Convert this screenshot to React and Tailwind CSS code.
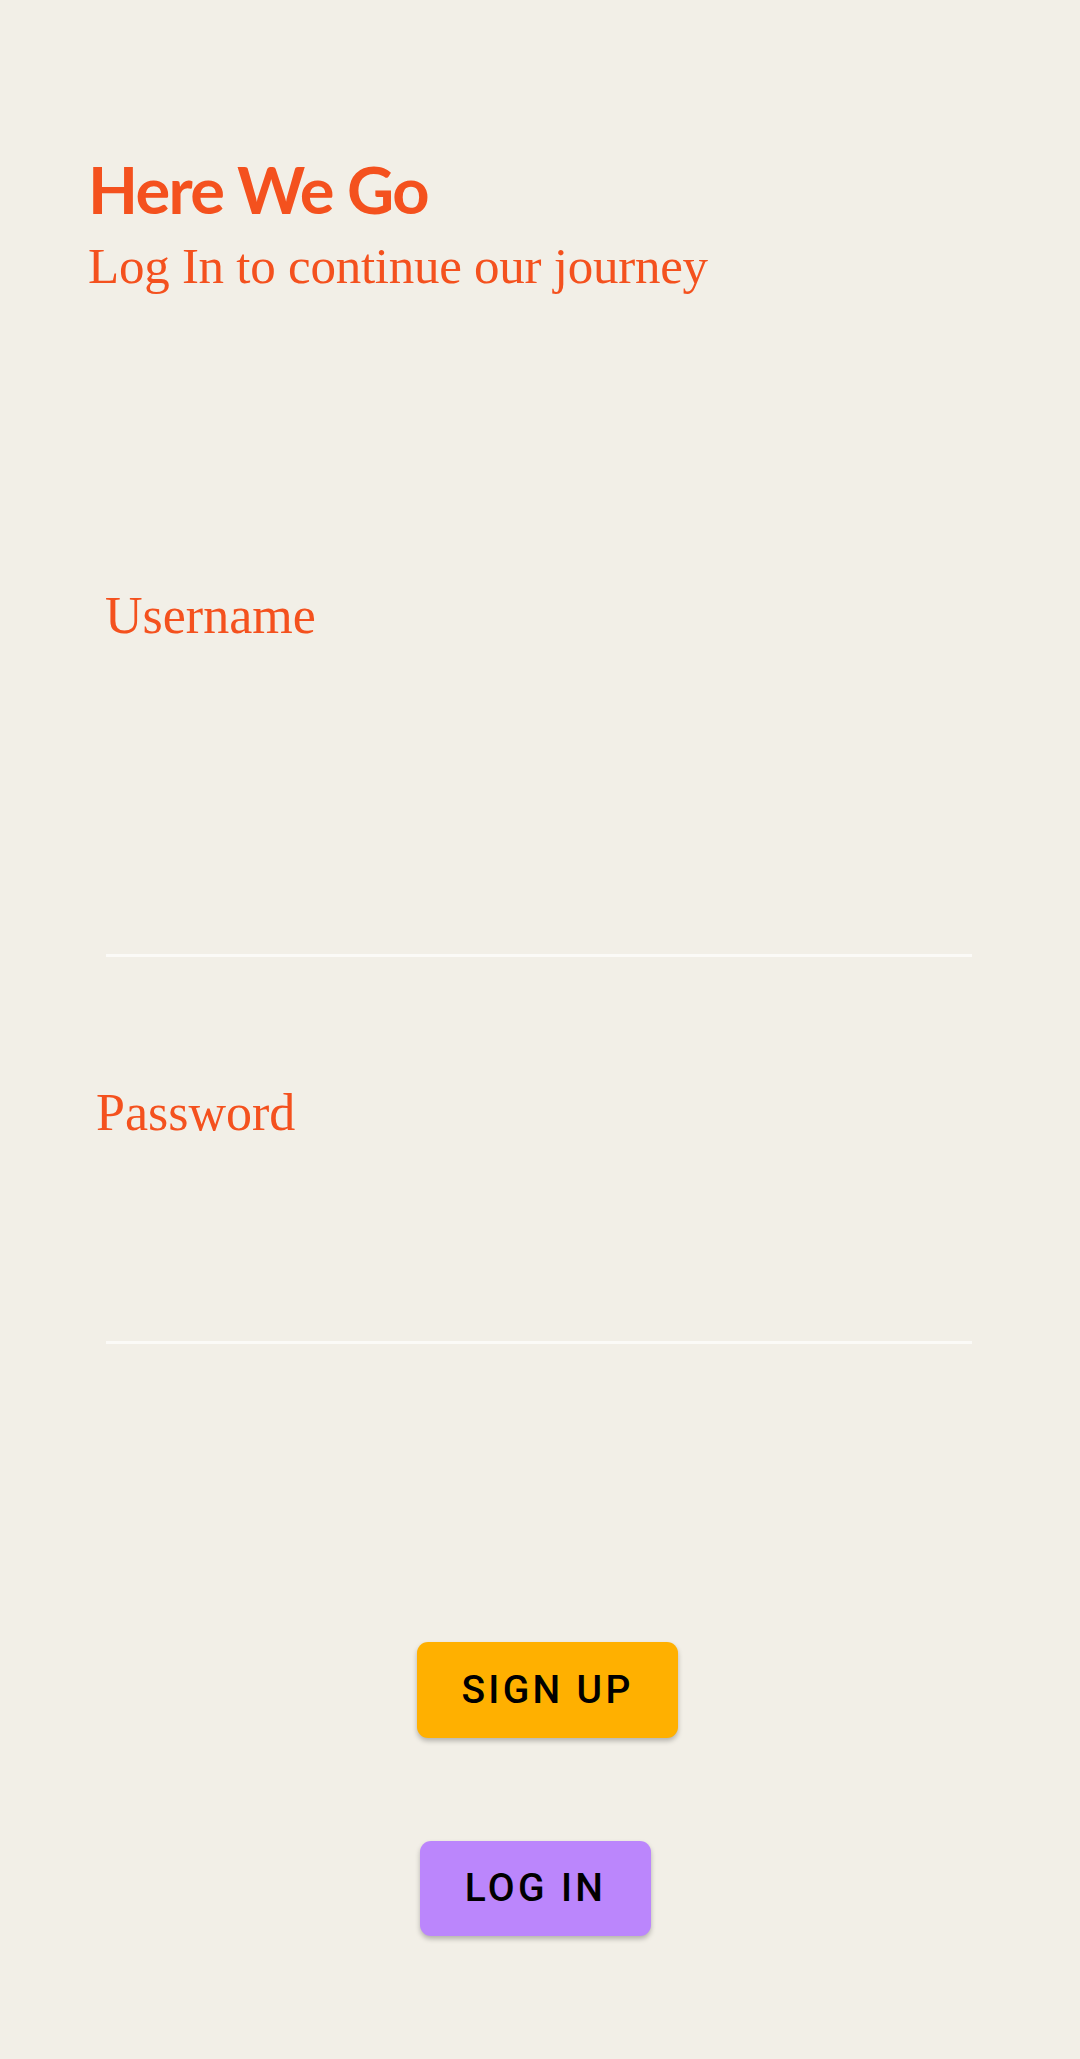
const serif = { fontFamily: '"Liberation Serif", serif' };

const Field = ({ label, labelClass, gapClass }) => (
    <div className="flex flex-col">
        <label className={`text-[52px] leading-none text-[#f4511e] ${labelClass}`} style={serif}>
            {label}
        </label>
        <div className={`ml-[106px] w-[866px] h-[3px] bg-[#fbfaf7] ${gapClass}`} />
    </div>
);

const App = () => {
    return (
        <div className="min-h-[2059px] w-full bg-[#f2efe7] flex flex-col">
            <div className="pl-[88px] pt-[157px]">
                <h1
                    className="text-[65px] leading-none font-bold tracking-[-0.025em] text-[#f4511e]"
                    style={{ fontFamily: 'Lato, "Noto Sans", sans-serif' }}
                >
                    Here We Go
                </h1>
                <p className="mt-[19px] text-[51px] leading-none tracking-[-0.005em] text-[#f4511e]" style={serif}>
                    Log In to continue our journey
                </p>
            </div>

            <div className="mt-[298px]">
                <Field label="Username" labelClass="pl-[105px]" gapClass="mt-[312px]" />
            </div>

            <div className="mt-[130px]">
                <Field label="Password" labelClass="pl-[96px]" gapClass="mt-[202px]" />
            </div>

            <div className="mt-[298px] flex flex-col" style={{ fontFamily: 'Roboto, sans-serif' }}>
                <button className="ml-[417px] w-[261px] h-[96px] rounded-[11px] bg-[#ffb000] text-black text-[39px] font-medium tracking-[0.085em] shadow-[0_3px_5px_rgba(0,0,0,0.25)] flex items-center justify-center">
                    SIGN UP
                </button>
                <button className="mt-[103px] ml-[420px] w-[231px] h-[95px] rounded-[11px] bg-[#bb86fc] text-black text-[39px] font-medium tracking-[0.085em] shadow-[0_3px_5px_rgba(0,0,0,0.25)] flex items-center justify-center">
                    LOG IN
                </button>
            </div>
        </div>
    );
};

export default App;
